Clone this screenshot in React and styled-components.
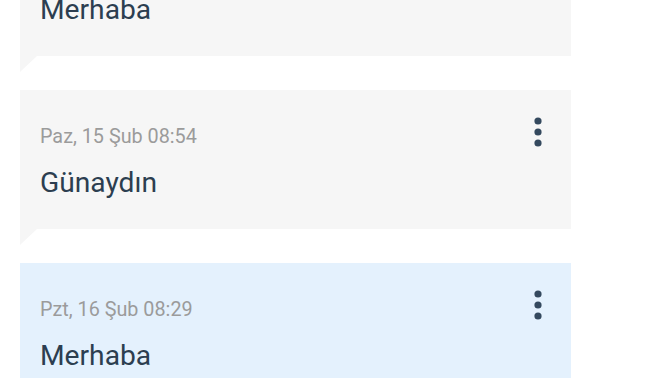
import React from "react";
import styled, { createGlobalStyle } from "styled-components";

const Global = createGlobalStyle`
  html, body { margin: 0; padding: 0; background: #ffffff; }
  body { font-family: Roboto, "Noto Sans", "Liberation Sans", sans-serif; overflow: hidden; }
`;

const List = styled.div`
  display: flex;
  flex-direction: column;
  gap: 34px;
  width: 551px;
  margin: -83px 0 0 20px;
`;

const Card = styled.div`
  position: relative;
  background: ${(p) => (p.$active ? "#e4f1fd" : "#f6f6f6")};
  padding: 27px 28px 30px 20px;
  &::after {
    content: "";
    position: absolute;
    left: 0;
    bottom: -16px;
    width: 17px;
    height: 16px;
    background: inherit;
    clip-path: polygon(0 0, 100% 0, 0 100%);
  }
`;

const Header = styled.div`
  display: flex;
  justify-content: space-between;
  align-items: flex-start;
  height: 30px;
`;

const DateText = styled.div`
  margin-top: 8px;
  font-size: 19.8px;
  line-height: 24px;
  color: #9b9b9b;
`;

const MenuButton = styled.button`
  border: 0;
  padding: 0;
  margin: 0;
  background: transparent;
  width: 10px;
  height: 30px;
  display: flex;
  cursor: pointer;
`;

const Message = styled.div`
  margin-top: 20px;
  font-size: 28.2px;
  line-height: 32px;
  color: #2c3e50;
`;

const Kebab = () => (
  <svg width="10" height="30" viewBox="0 0 10 30">
    <circle cx="5" cy="4" r="3.6" fill="#34495e" />
    <circle cx="5" cy="15" r="3.6" fill="#34495e" />
    <circle cx="5" cy="26" r="3.6" fill="#34495e" />
  </svg>
);

const items = [
  { date: "Cmt, 14 Şub 09:12", text: "Merhaba" },
  { date: "Paz, 15 Şub 08:54", text: "Günaydın" },
  { date: "Pzt, 16 Şub 08:29", text: "Merhaba", active: true },
];

export default function App() {
  return (
    <>
      <Global />
      <List>
        {items.map((it, i) => (
          <Card key={i} $active={it.active}>
            <Header>
              <DateText>{it.date}</DateText>
              <MenuButton aria-label="Menü">
                <Kebab />
              </MenuButton>
            </Header>
            <Message>{it.text}</Message>
          </Card>
        ))}
      </List>
    </>
  );
}
